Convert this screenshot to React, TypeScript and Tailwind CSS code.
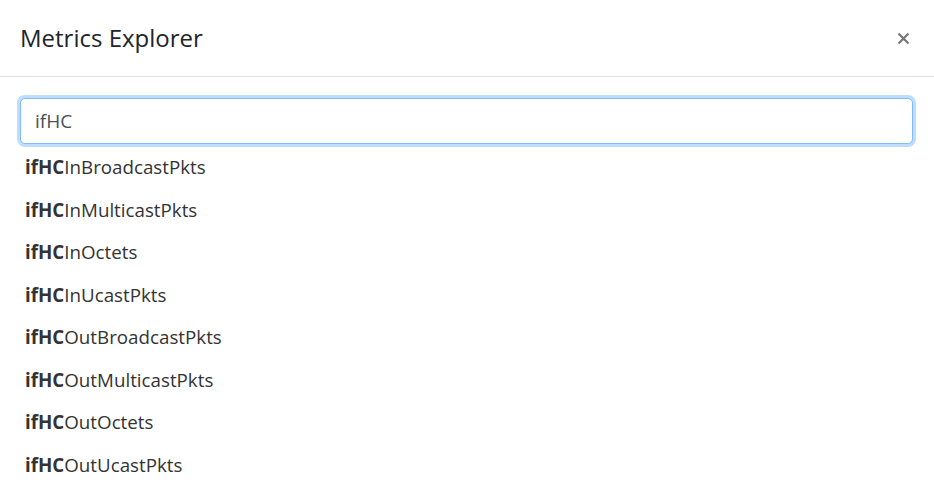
import React, { useState } from 'react';

const metrics = [
  'InBroadcastPkts',
  'InMulticastPkts',
  'InOctets',
  'InUcastPkts',
  'OutBroadcastPkts',
  'OutMulticastPkts',
  'OutOctets',
  'OutUcastPkts',
];

export default function App() {
  const [query, setQuery] = useState('ifHC');

  return (
    <div
      className="w-[934px] h-[503px] bg-white text-[#212529] overflow-hidden"
      style={{ fontFamily: '"Open Sans", "Noto Sans", sans-serif' }}
    >
      {/* Header */}
      <div className="flex items-center justify-between h-[77px] pl-5 pr-[24px] border-b border-[#dee2e6]">
        <h5 className="text-[24px] leading-none font-medium text-[#212529]">Metrics Explorer</h5>
        <button className="text-[#777] leading-none">
          <svg width="13" height="13" viewBox="0 0 13 13">
            <path d="M1.5 1.5 L11.5 11.5 M11.5 1.5 L1.5 11.5" stroke="currentColor" strokeWidth="2.2" />
          </svg>
        </button>
      </div>

      {/* Body */}
      <div className="pt-[21px] px-5">
        <input
          autoFocus
          value={query}
          onChange={(e) => setQuery(e.target.value)}
          className="block w-[893px] h-[46px] px-[14px] text-[19px] text-[#495057] bg-white border border-[#80bdff] rounded-[5px] outline-none shadow-[0_0_0_3px_rgba(0,123,255,0.25)]"
        />
        <ul className="mt-[2px] pl-[5px]">
          {metrics.map((m) => (
            <li key={m} className="h-[42.5px] flex items-center text-[18.75px] text-[#333]">
              <b className="font-bold">ifHC</b>
              <span>{m}</span>
            </li>
          ))}
        </ul>
      </div>
    </div>
  );
}
